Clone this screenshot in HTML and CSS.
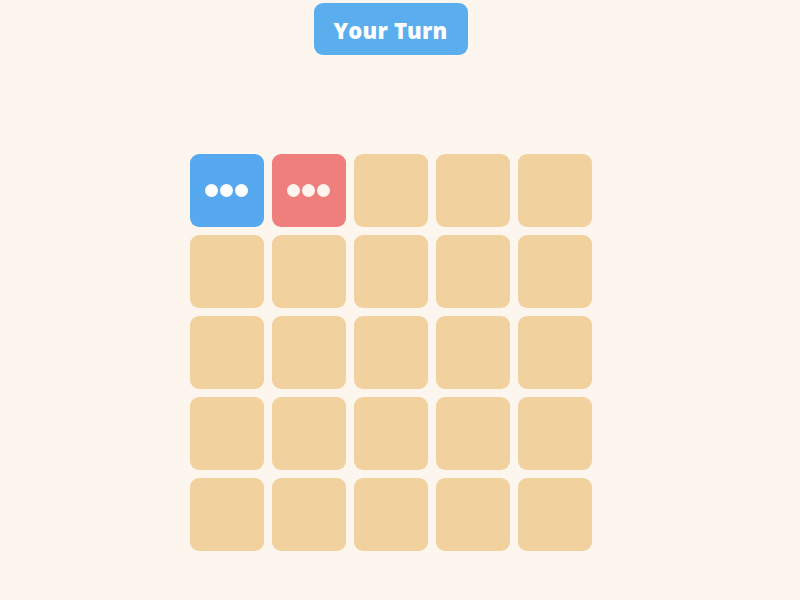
FILE: index.html
```html
<!DOCTYPE html>
<html>
<head>
<meta charset="utf-8">
<link rel="stylesheet" href="styles.css">
</head>
<body>
<div class="page">
  <div class="turn">Your Turn</div>
  <div class="board">
    <div class="cell blue"><span class="dots"><i></i><i></i><i></i></span></div>
    <div class="cell red"><span class="dots"><i></i><i></i><i></i></span></div>
    <div class="cell"></div><div class="cell"></div><div class="cell"></div>
    <div class="cell"></div><div class="cell"></div><div class="cell"></div><div class="cell"></div><div class="cell"></div>
    <div class="cell"></div><div class="cell"></div><div class="cell"></div><div class="cell"></div><div class="cell"></div>
    <div class="cell"></div><div class="cell"></div><div class="cell"></div><div class="cell"></div><div class="cell"></div>
    <div class="cell"></div><div class="cell"></div><div class="cell"></div><div class="cell"></div><div class="cell"></div>
  </div>
</div>
</body>
</html>
```
FILE: styles.css
```css
html, body {
  margin: 0;
  padding: 0;
  background: #fdf6ee;
  height: 100%;
}
.page {
  width: 781px;
  display: flex;
  flex-direction: column;
  align-items: center;
  padding-top: 3px;
}
.turn {
  width: 154px;
  height: 52px;
  box-sizing: border-box;
  padding-top: 2px;
  border-radius: 9px;
  background: #5aaeee;
  color: #fff;
  font-family: "Open Sans", "DejaVu Sans", sans-serif;
  font-weight: 800;
  font-size: 22px;
  display: flex;
  align-items: center;
  justify-content: center;
  letter-spacing: 0.2px;
}
.board {
  margin-top: 99px;
  display: grid;
  grid-template-columns: repeat(5, 74px);
  grid-auto-rows: 73px;
  column-gap: 8px;
  row-gap: 8px;
}
.cell {
  background: #f1d29f;
  border-radius: 9px;
  display: flex;
  align-items: center;
  justify-content: center;
}
.cell.blue { background: #57a9ef; }
.cell.red { background: #ef7f7c; }
.dots {
  display: flex;
  gap: 2px;
}
.dots i {
  width: 13px;
  height: 13px;
  border-radius: 50%;
  background: #fff;
  display: block;
}
.red .dots i { background: #fff4ee; }
```
